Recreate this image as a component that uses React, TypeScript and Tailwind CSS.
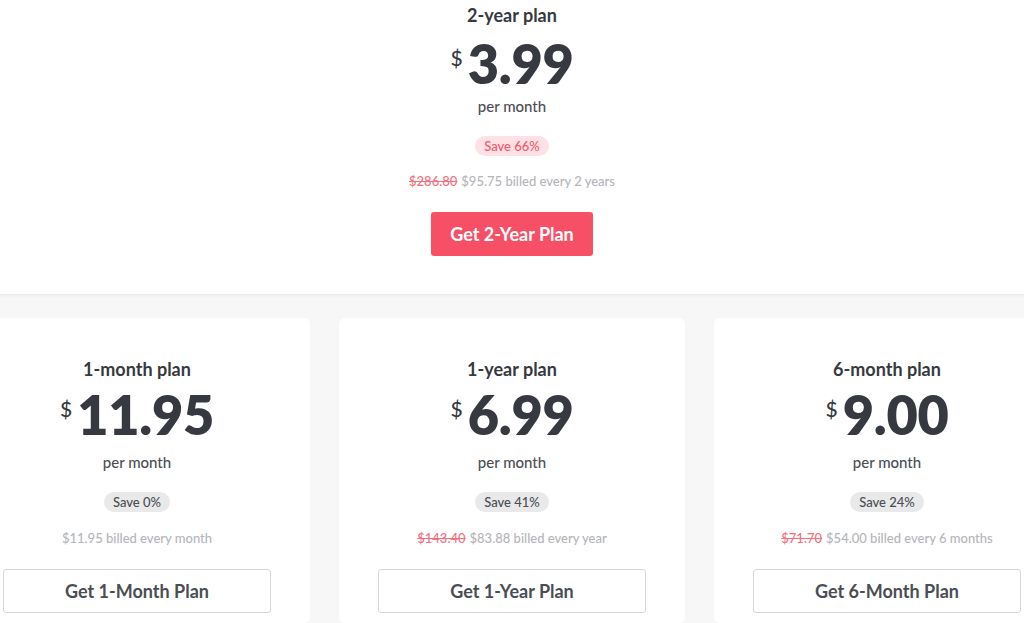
type Plan = {
  name: string;
  price: string;
  save: string;
  oldPrice?: string;
  billed: string;
  cta: string;
};

const plans: Plan[] = [
  { name: '1-month plan', price: '11.95', save: 'Save 0%', billed: '$11.95 billed every month', cta: 'Get 1-Month Plan' },
  { name: '1-year plan', price: '6.99', save: 'Save 41%', oldPrice: '$143.40', billed: '$83.88 billed every year', cta: 'Get 1-Year Plan' },
  { name: '6-month plan', price: '9.00', save: 'Save 24%', oldPrice: '$71.70', billed: '$54.00 billed every 6 months', cta: 'Get 6-Month Plan' },
];

function Price({ value }: { value: string }) {
  return (
    <div className="flex items-start justify-center text-[#363a40]">
      <span className="mt-[9px] mr-[5px] text-[21px] leading-none font-medium">$</span>
      <span className="text-[54px] leading-[52px] font-extrabold tracking-[-0.3px]">{value}</span>
    </div>
  );
}

function PlanCard({ plan }: { plan: Plan }) {
  return (
    <div className="w-[346px] shrink-0 rounded-[6px] bg-white flex flex-col items-center pt-[41px] pb-[10px]">
      <h3 className="text-[18px] leading-[20px] font-bold text-[#363a40]">{plan.name}</h3>
      <div className="mt-[10px]">
        <Price value={plan.price} />
      </div>
      <p className="mt-[11px] text-[15px] leading-[20px] font-medium text-[#4a4e54]">per month</p>
      <span className="mt-[20px] rounded-full bg-[#e9e9ea] px-[9px] text-[13px] leading-[20px] font-medium text-[#4a4e54]">
        {plan.save}
      </span>
      <p className="mt-[18px] text-[13px] leading-[16px] font-medium text-[#b4b6ba]">
        {plan.oldPrice && <span className="mr-[4px] text-[#f5707e] line-through">{plan.oldPrice}</span>}
        {plan.billed}
      </p>
      <button className="mt-[23px] h-[44px] w-[268px] rounded-[3px] border border-[#d6d7d9] bg-white text-[18px] font-bold text-[#4a4e54]">
        {plan.cta}
      </button>
    </div>
  );
}

export default function App() {
  return (
    <div className="min-h-[623px] bg-[#f7f7f7] overflow-hidden" style={{ fontFamily: 'Lato, "Noto Sans", sans-serif' }}>
      {/* Featured plan */}
      <section className="relative z-10 h-[294px] bg-white flex flex-col items-center pt-[5px] shadow-[0_1px_3px_rgba(0,0,0,0.08)]">
        <h2 className="text-[18px] leading-[20px] font-bold text-[#363a40]">2-year plan</h2>
        <div className="mt-[13px]">
          <Price value="3.99" />
        </div>
        <p className="mt-[6px] text-[15px] leading-[20px] font-medium text-[#4a4e54]">per month</p>
        <span className="mt-[20px] rounded-full bg-[#fde1e4] px-[9px] text-[13px] leading-[20px] font-medium text-[#f3596a]">
          Save 66%
        </span>
        <p className="mt-[17px] text-[13px] leading-[16px] font-medium text-[#b4b6ba]">
          <span className="mr-[4px] text-[#f5707e] line-through">$286.80</span>
          $95.75 billed every 2 years
        </p>
        <button className="mt-[23px] h-[44px] w-[162px] rounded-[3px] bg-[#f74f66] text-[18px] font-bold text-white">
          Get 2-Year Plan
        </button>
      </section>

      {/* Other plans */}
      <section className="flex justify-center gap-[29px] pt-[24px]">
        {plans.map((p) => (
          <PlanCard key={p.name} plan={p} />
        ))}
      </section>
    </div>
  );
}
